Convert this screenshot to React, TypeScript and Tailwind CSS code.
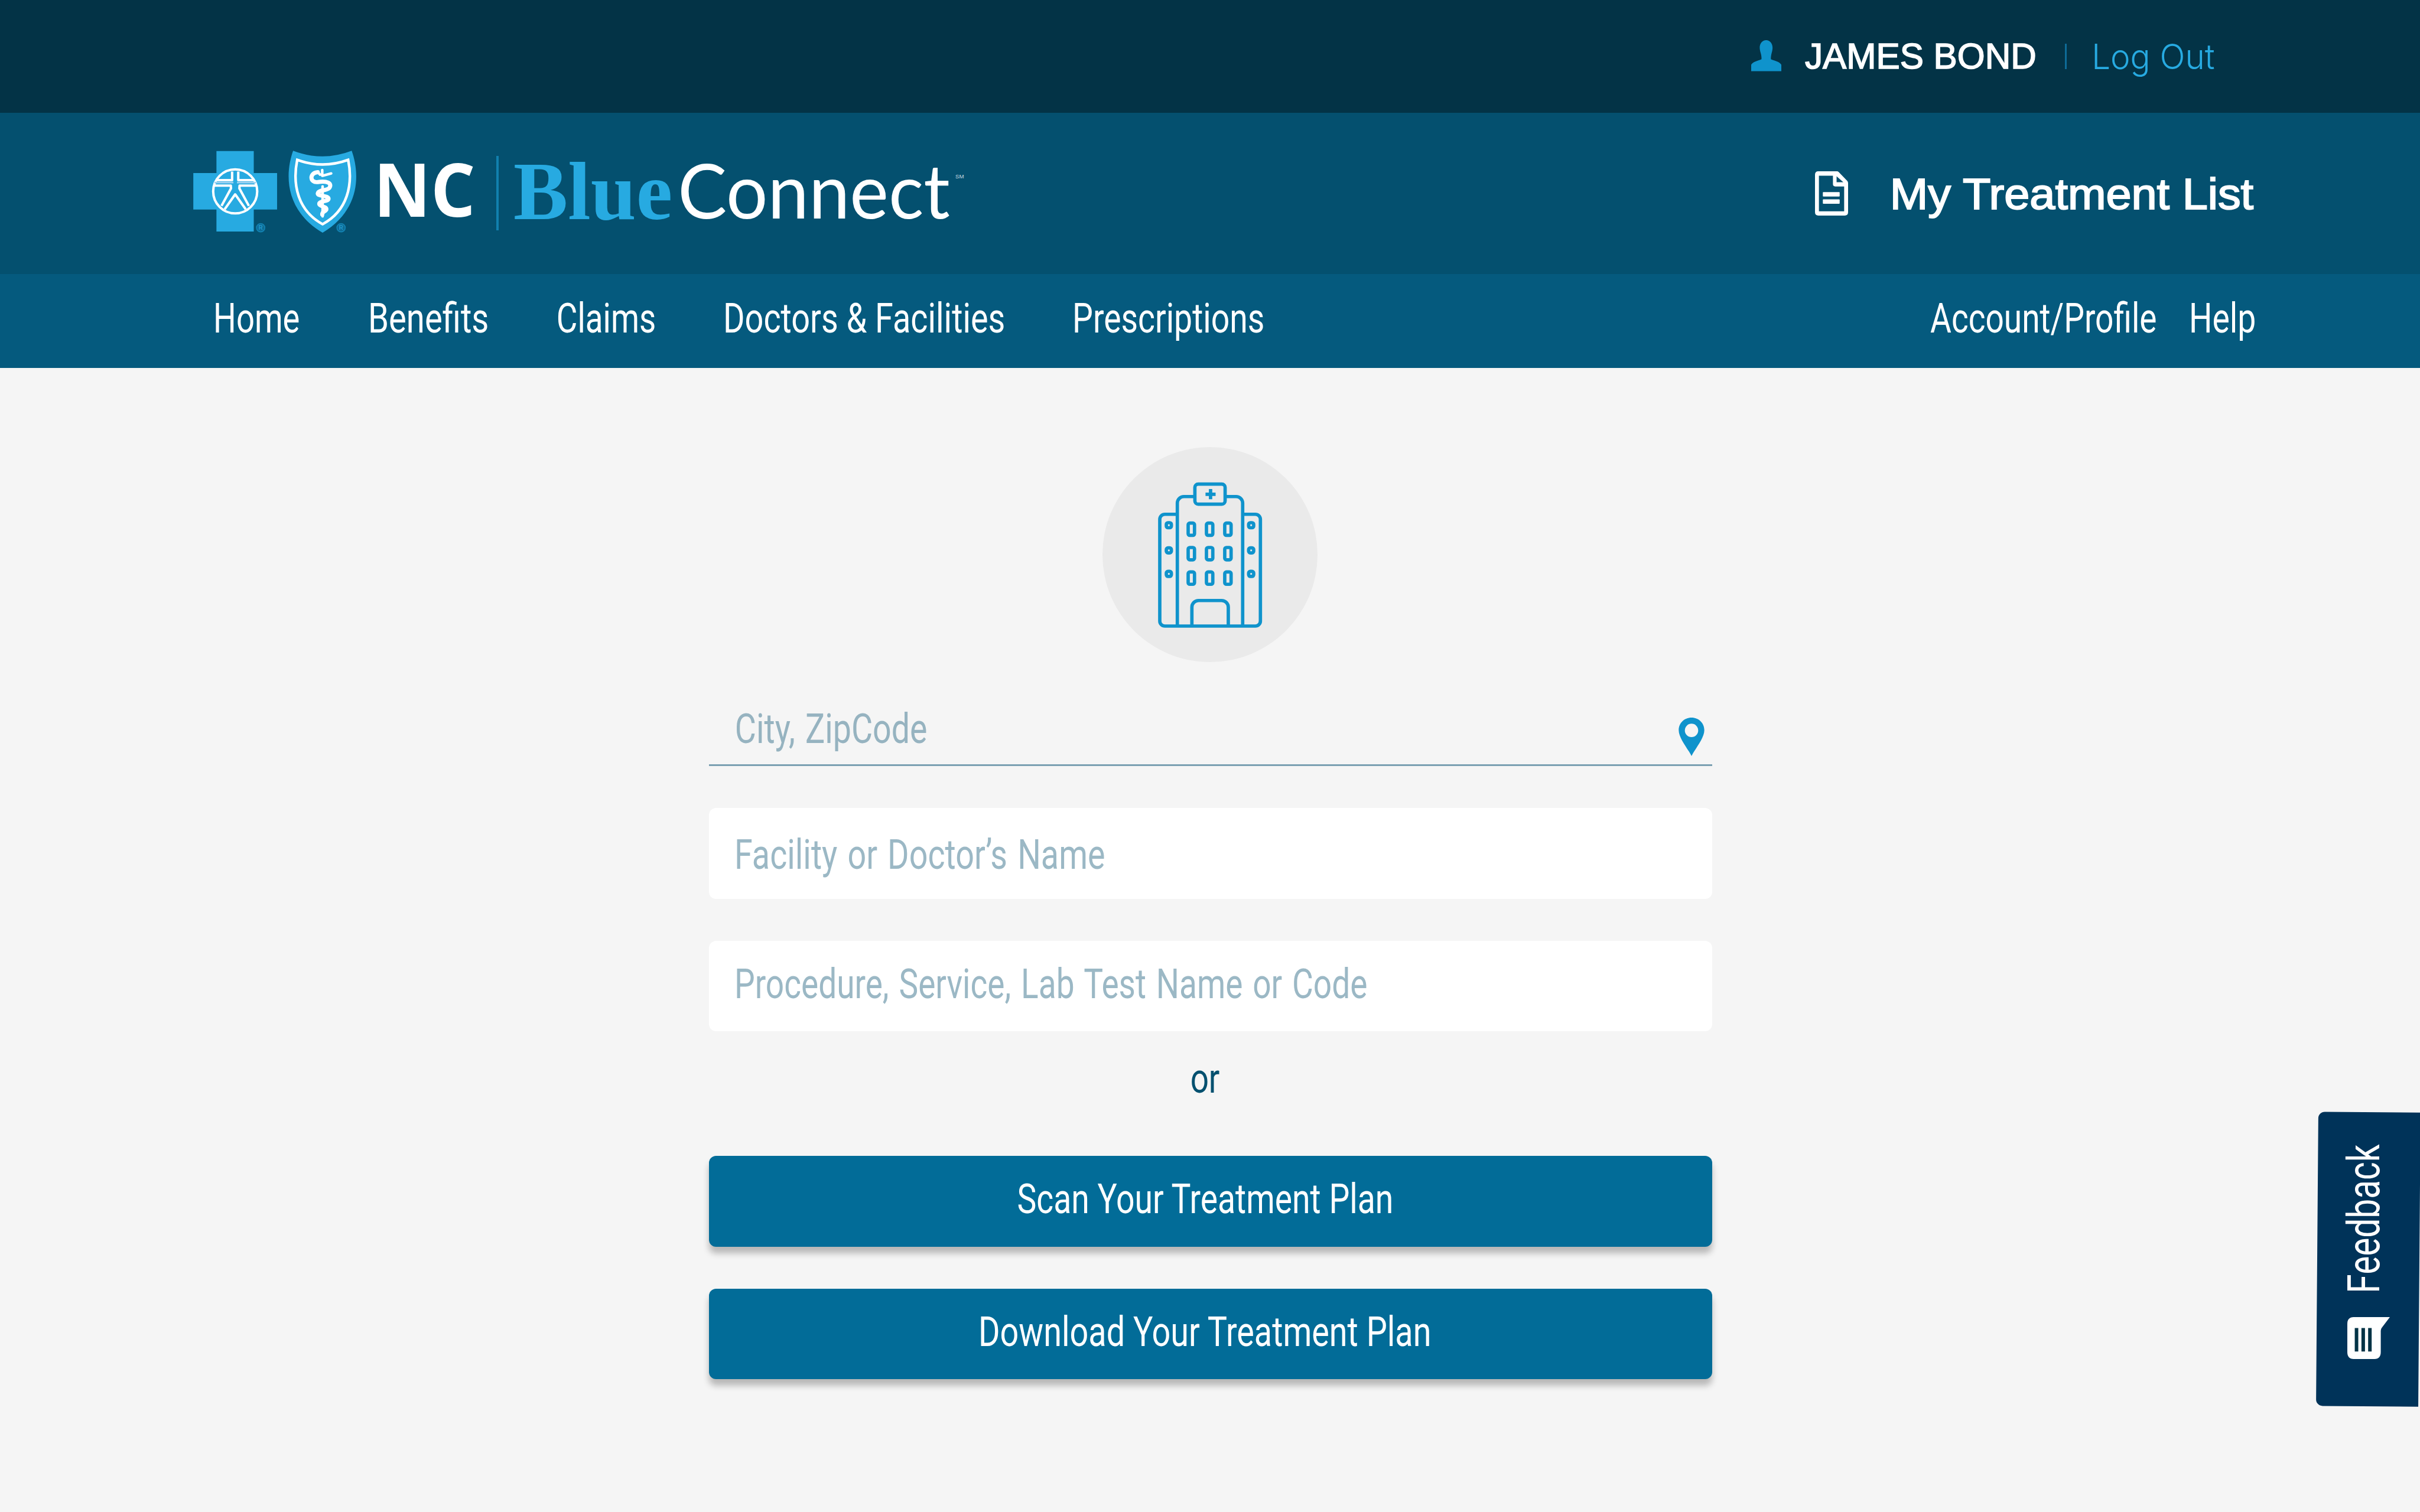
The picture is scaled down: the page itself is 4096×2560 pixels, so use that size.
import React, { useLayoutEffect, useRef, useState } from "react";

/** A line of text whose glyphs are condensed to fill the width of its box. */
function Fit({ children, className = "" }: { children: string; className?: string }) {
  const box = useRef<HTMLSpanElement>(null);
  const [transform, setTransform] = useState("none");
  useLayoutEffect(() => {
    const el = box.current;
    const ctx = document.createElement("canvas").getContext("2d") as any;
    if (!el || !ctx) return;
    const cs = getComputedStyle(el);
    ctx.font = cs.font || `${cs.fontWeight} ${cs.fontSize} ${cs.fontFamily}`;
    ctx.wordSpacing = cs.wordSpacing;
    const m = ctx.measureText(children);
    const ink = m.actualBoundingBoxRight + m.actualBoundingBoxLeft;
    const k = el.clientWidth / ink;
    setTransform(`translateX(${m.actualBoundingBoxLeft * k}px) scaleX(${k})`);
  }, [children]);
  return (
    <span ref={box} className={`block shrink-0 whitespace-nowrap ${className}`}>
      <span className="inline-block origin-left" style={{ transform }}>
        {children}
      </span>
    </span>
  );
}

const UserIcon = () => (
  <svg viewBox="0 0 54 56" className="h-[53px] w-[51px] shrink-0" fill="#0f93cc">
    <path d="M26.8 0C33.5 0 38.5 6 38.3 14C38 21 35 26 35.3 34C39 36.500 50 37 54 44V55.500H0V44C4 37 15 36.500 18.500 34C19 26 15.600 21 15.300 14C15 6 20 0 26.800 0Z" />
  </svg>
);

const DocIcon = () => (
  <svg viewBox="0 0 59 79" className="h-[75px] w-[56px] shrink-0" fill="#fff">
    <path
      fillRule="evenodd"
      d="M6 0H39Q41 0 42.500 1.500L57.500 17Q59 18.500 59 21V73Q59 79 53 79H6Q0 79 0 73V6Q0 0 6 0ZM7 8V71.500H52V27H36Q32 27 32 23V8ZM38.500 9V19.500H50.500Z"
    />
    <rect x="14" y="37" width="30" height="8" rx="1" />
    <rect x="14" y="50" width="30" height="8" rx="1" />
  </svg>
);

const Emblem = () => (
  <svg viewBox="75 78 876 456" className="mt-[61px] h-[144px] w-[277px] shrink-0" fill="none">
    <path fill="#27aae1" d="M199 90H399V208H524V403H399V521H199V403H75V208H199Z" />
    <g stroke="#fff" strokeWidth="13" strokeLinejoin="round">
      <circle cx="299.500" cy="306" r="118" />
      <path d="M195 246H283V200M404 246H316V200" />
      <path d="M188 275H276L277 290L226 384M411 275H323L322 290L373 384M243 402L299.500 322L356 402" />
    </g>
    <path stroke="#9fd3f2" strokeWidth="9" d="M188 259H290M309 259H411" />
    <path fill="#27aae1" d="M610 88Q768 148 924 88C964 200 979 400 768 528C555 400 570 200 610 88Z" />
    <path stroke="#fff" strokeWidth="14" d="M632 137Q768 187 905 137C932 270 902 410 768 482C635 410 605 270 632 137Z" />
    <path
      stroke="#fff"
      strokeWidth="22"
      strokeLinecap="round"
      strokeLinejoin="round"
      d="M742 203C696 206 698 262 742 256C790 248 822 262 804 288C790 304 744 296 742 318C744 334 800 326 800 346C798 362 748 356 750 374C752 388 792 386 788 404C782 416 766 412 766 430"
    />
    <path stroke="#fff" strokeWidth="14" strokeLinecap="round" d="M766 192V222M770 222L814 210M768 280V440M742 203L754 216" />
    <g stroke="#1281b0" strokeWidth="6">
      <circle cx="436" cy="501" r="22" fill="#0d6a94" />
      <circle cx="867" cy="501" r="22" fill="#0d6a94" />
    </g>
    <g fill="#27aae1" className="font-['Liberation_Sans'] text-[32px] font-bold" textAnchor="middle" opacity="0.7">
      <text x="436" y="512">R</text>
      <text x="867" y="512">R</text>
    </g>
  </svg>
);

const Hospital = () => (
  <svg viewBox="54 54 1152 1152" className="h-[364px] w-[364px]" fill="none" stroke="#0f93cc" strokeWidth="18">
    <circle cx="630" cy="630" r="576" fill="#eaeaea" stroke="none" />
    <path d="M450 414H388a27 27 0 0 0-27 27V986a27 27 0 0 0 27 27H873a27 27 0 0 0 27-27V441a27 27 0 0 0-27-27H810" />
    <path d="M455 1013V354a35 35 0 0 1 35-35H545M715 319H770a35 35 0 0 1 35 35V1013" />
    <rect x="549" y="252" width="162" height="108" rx="18" />
    <path d="M606 306.500H660M633 279V333" />
    {[513, 611, 709].map((x) =>
      [461, 592, 723].map((y) => <rect key={`${x}-${y}`} x={x} y={y} width="34" height="66" rx="9" />)
    )}
    {[396, 837].map((x) =>
      [459, 594, 720].map((y) => <rect key={`${x}-${y}`} x={x} y={y} width="27" height="27" rx="9" />)
    )}
    <path d="M533 1013V912a36 36 0 0 1 36-36H692a36 36 0 0 1 36 36V1013" />
  </svg>
);

const PinIcon = () => (
  <svg viewBox="0 0 46 69" className="h-[65px] w-[44px] shrink-0" fill="#0f93cc">
    <path
      fillRule="evenodd"
      d="M23 0C36 0 46 10 46 22.500C46 37 30 55 23 69C16 55 0 37 0 22.500C0 10 10 0 23 0ZM23 11A12 12 0 1 0 23 35A12 12 0 1 0 23 11Z"
    />
  </svg>
);

const FeedbackIcon = () => (
  <svg
    viewBox="270 1079 229 207"
    preserveAspectRatio="none"
    className="mt-[45px] ml-[53px] h-[71px] w-[72px]"
    fill="#fff"
  >
    <path d="M304 1079H499L455 1132Q450 1138 450 1146V1252Q450 1286 416 1286H304Q270 1286 270 1252V1113Q270 1079 304 1079Z" />
    <path fill="#033346" d="M310 1133h19v116h-19zM346 1133h19v116h-19zM382 1133h19v116h-19z" />
  </svg>
);

export default function App() {
  return (
    <div className="relative flex h-[2560px] w-[4096px] flex-col overflow-hidden bg-[#f5f5f5] font-['Roboto',sans-serif]">
      <div className="flex h-[191px] items-start bg-[#033346] pl-[2964px] leading-[70px]">
        <div className="mt-[68px]">
          <UserIcon />
        </div>
        <Fit className="mt-[60px] ml-[40px] w-[389px] font-['Liberation_Sans',sans-serif] text-[60.500px] text-white [-webkit-text-stroke:1.6px_white]">
          JAMES BOND
        </Fit>
        <div className="mt-[74px] ml-[51px] h-[43px] w-[3px] bg-[#0e6c98]" />
        <Fit className="mt-[61px] ml-[47px] w-[203px] font-['Inter',sans-serif] text-[59px] font-light text-[#27aae1]">Log Out</Fit>
      </div>

      <header className="flex h-[273px] items-start bg-[#04506f] pr-[280px] pl-[327px]">
        <Emblem />
        <Fit className="mt-[68px] ml-[39px] w-[158px] font-['Open_Sans',sans-serif] text-[125px] leading-[120px] font-bold text-white">NC</Fit>
        <div className="mt-[73px] ml-[39px] h-[126px] w-[4px] bg-[#1180ae]" />
        <Fit className="mt-[63px] ml-[27px] w-[264px] font-['Liberation_Serif',serif] text-[140px] leading-[140px] font-bold text-[#27aae1]">Blue</Fit>
        <Fit className="mt-[65px] ml-[18px] w-[454px] font-['Lato',sans-serif] text-[128px] leading-[130px] font-normal text-white">Connect</Fit>
        <Fit className="mt-[103px] ml-[10px] w-[14px] font-['Liberation_Sans',sans-serif] text-[9px] leading-[10px] text-[#c5d8e0]">SM</Fit>
        <div className="mt-[99px] ml-auto">
          <DocIcon />
        </div>
        <Fit className="mt-[98px] ml-[77px] w-[611px] font-['Liberation_Sans',sans-serif] text-[74px] leading-[80px] text-white [-webkit-text-stroke:2px_white]">
          My Treatment List
        </Fit>
      </header>

      <nav className="flex h-[159px] items-center bg-[#055a7e] pr-[280px] pb-[7px] pl-[365px] text-[69.500px] leading-[80px] text-white">
        <Fit className="w-[141px]">Home</Fit>
        <Fit className="ml-[121px] w-[198px]">Benefits</Fit>
        <Fit className="ml-[120px] w-[163px]">Claims</Fit>
        <Fit className="ml-[120px] w-[471px]">Doctors &amp; Facilities</Fit>
        <Fit className="ml-[120px] w-[319px]">Prescriptions</Fit>
        <Fit className="ml-auto w-[382px]">Account/Profile</Fit>
        <Fit className="ml-[60px] w-[107px]">Help</Fit>
      </nav>

      <main className="ml-[1200px] flex w-[1698px] flex-col text-[69.500px] leading-[80px] [word-spacing:4px]">
        <div className="mt-[134px] ml-[666px] w-[364px]">
          <Hospital />
        </div>
        <div className="mt-[72px] flex h-[104px] items-start border-b-[3px] border-[#7ba0b2] pr-[13px] pl-[47px]">
          <Fit className="mt-[2px] w-[321px] text-[#96b3c0]">City, ZipCode</Fit>
          <div className="mt-[22px] ml-auto">
            <PinIcon />
          </div>
        </div>
        <div className="mt-[71px] flex h-[154px] items-start rounded-[12px] bg-white pt-[40px] pl-[47px]">
          <Fit className="w-[622px] text-[#9bb8c5]">Facility or Doctor’s Name</Fit>
        </div>
        <div className="mt-[71px] flex h-[153px] items-start rounded-[12px] bg-white pt-[34px] pl-[47px]">
          <Fit className="w-[1067px] text-[#9bb8c5]">Procedure, Service, Lab Test Name or Code</Fit>
        </div>
        <Fit className="mt-[41px] ml-[817px] w-[47px] text-[#03506f]">or</Fit>
        <button className="mt-[90px] flex h-[154px] items-start rounded-[12px] bg-[#026c98] pt-[34px] pl-[523px] text-white shadow-[0_11px_11px_rgba(0,0,0,0.25)]">
          <Fit className="w-[633px] text-left">Scan Your Treatment Plan</Fit>
        </button>
        <button className="mt-[71px] flex h-[153px] items-start rounded-[12px] bg-[#026c98] pt-[34px] pl-[460px] text-white shadow-[0_11px_11px_rgba(0,0,0,0.25)]">
          <Fit className="w-[760px] text-left">Download Your Treatment Plan</Fit>
        </button>
      </main>

      <div className="absolute top-[1883px] left-[3920px] h-[499px] w-[176px]">
        <div className="absolute top-0 left-[2px] h-[498px] w-[173px] rotate-[0.45deg] rounded-l-[11px] bg-[#003359]" />
        <div className="relative flex flex-col">
          <div className="mt-[54px] ml-[43px] flex h-[248px] w-[76px] items-center justify-center">
            <Fit className="w-[248px] -rotate-90 text-[75.500px] leading-[76px] text-white">Feedback</Fit>
          </div>
          <FeedbackIcon />
        </div>
      </div>
    </div>
  );
}
